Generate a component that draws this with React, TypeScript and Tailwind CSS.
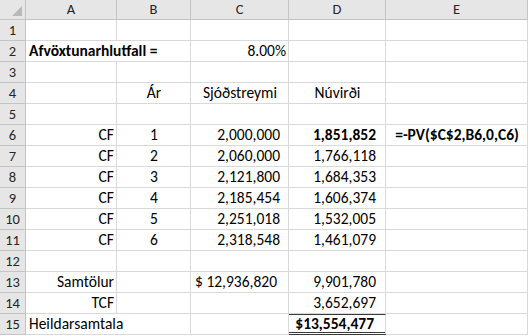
import React from "react";

type Cell = {
  text?: string;
  align?: "left" | "right" | "center";
  bold?: boolean;
  span?: number;
  money?: boolean;
  total?: boolean;
  pr?: string;
};

type Row = { n: number; cells: (Cell | null)[] };

const cols = ["A", "B", "C", "D", "E"];
const widths = ["w-[91px]", "w-[74px]", "w-[98px]", "w-[97px]", "w-[142px]"];

const cf = (year: number, c: string, d: string, bold = false): Row => ({
  n: 5 + year,
  cells: [
    { text: "CF", align: "right" },
    { text: String(year), align: "center" },
    { text: c, align: "right", pr: "pr-[8px]" },
    { text: d, align: "right", bold, pr: "pr-[9px]" },
    year === 1 ? { text: "=-PV($C$2,B6,0,C6)", align: "center", bold: true } : {},
  ],
});

const rows: Row[] = [
  { n: 1, cells: [{}, {}, {}, {}, {}] },
  {
    n: 2,
    cells: [
      { text: "Afvöxtunarhlutfall =", align: "left", bold: true, span: 2 },
      null,
      { text: "8.00%", align: "right" },
      {},
      {},
    ],
  },
  { n: 3, cells: [{}, {}, {}, {}, {}] },
  {
    n: 4,
    cells: [
      {},
      { text: "Ár", align: "center" },
      { text: "Sjóðstreymi", align: "center" },
      { text: "Núvirði", align: "center" },
      {},
    ],
  },
  { n: 5, cells: [{}, {}, {}, {}, {}] },
  cf(1, "2,000,000", "1,851,852", true),
  cf(2, "2,060,000", "1,766,118"),
  cf(3, "2,121,800", "1,684,353"),
  cf(4, "2,185,454", "1,606,374"),
  cf(5, "2,251,018", "1,532,005"),
  cf(6, "2,318,548", "1,461,079"),
  { n: 12, cells: [{}, {}, {}, {}, {}] },
  {
    n: 13,
    cells: [
      { text: "Samtölur", align: "right" },
      {},
      { text: "12,936,820", money: true, pr: "pr-[11px]" },
      { text: "9,901,780", align: "right", pr: "pr-[9px]" },
      {},
    ],
  },
  {
    n: 14,
    cells: [
      { text: "TCF", align: "right" },
      {},
      {},
      { text: "3,652,697", align: "right", pr: "pr-[9px]" },
      {},
    ],
  },
  {
    n: 15,
    cells: [
      { text: "Heildarsamtala", align: "left", span: 2 },
      null,
      {},
      { text: "$13,554,477", align: "right", bold: true, total: true, pr: "pr-[11px]" },
      {},
    ],
  },
];

function SheetCell({ cell, width }: { cell: Cell; width: string }) {
  const justify =
    cell.align === "right" ? "justify-end" : cell.align === "center" ? "justify-center" : "justify-start";
  return (
    <div
      className={`${width} h-[21px] shrink-0 border-r border-b border-[#d9d9d9] flex items-center pl-[3px] ${
        cell.pr ?? "pr-[2px]"
      } ${justify} ${cell.bold ? "font-bold" : ""} ${
        cell.total ? "border-t border-t-[#3a3a3a] border-b-[3px] border-b-[#3a3a3a] border-double" : ""
      }`}
    >
      {cell.money ? (
        <div className="flex w-full justify-between pl-[1px]">
          <span>$</span>
          <span>{cell.text}</span>
        </div>
      ) : (
        <span className="whitespace-nowrap">{cell.text}</span>
      )}
    </div>
  );
}

export default function App() {
  return (
    <div
      className="w-[528px] h-[336px] overflow-hidden bg-white text-[15.5px] text-black leading-none"
      style={{ fontFamily: "Calibri, Carlito, Lato, sans-serif" }}
    >
      {/* column headers */}
      <div className="flex h-[20px]">
        <div className="w-[26px] h-[20px] shrink-0 bg-[#e6e6e6] border-r border-b border-[#c4c4c4] relative">
          <div className="absolute right-[3px] bottom-[3px] w-0 h-0 border-l-[10px] border-l-transparent border-b-[10px] border-b-[#b8b8b8]" />
        </div>
        {cols.map((c, i) => (
          <div
            key={c}
            className={`${widths[i]} h-[20px] shrink-0 bg-[#e6e6e6] border-r border-b border-[#c4c4c4] flex items-center justify-center text-[14.5px] text-[#262626]`}
          >
            {c}
          </div>
        ))}
      </div>

      {/* rows */}
      {rows.map((row) => (
        <div key={row.n} className="flex h-[21px]">
          <div className="w-[26px] h-[21px] shrink-0 bg-[#e6e6e6] border-r border-b border-[#c4c4c4] flex items-center justify-center text-[14.5px] text-[#262626]">
            {row.n}
          </div>
          {row.cells.map((cell, i) => {
            if (cell === null) return null;
            const w = cell.span === 2 ? "w-[165px]" : widths[i];
            return <SheetCell key={i} cell={cell} width={w} />;
          })}
        </div>
      ))}
    </div>
  );
}
